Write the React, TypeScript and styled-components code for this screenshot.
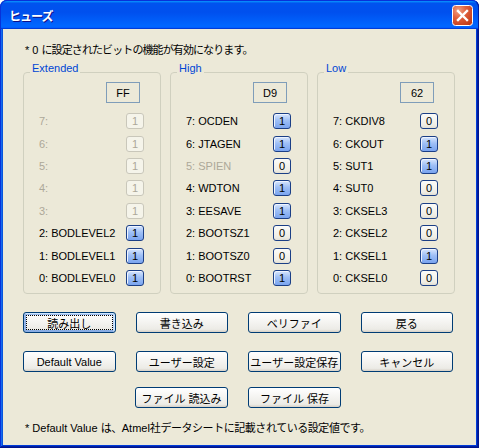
import React from "react";
import styled, { createGlobalStyle, css } from "styled-components";

const GlobalStyle = createGlobalStyle`
  html, body {
    margin: 0;
    padding: 0;
    background: #ffffff;
  }
  body {
    font-family: "Liberation Sans", "Noto Sans CJK JP", sans-serif;
    font-size: 11px;
    color: #000;
  }
`;

const Window = styled.div`
  width: 479px;
  height: 448px;
  box-sizing: border-box;
  display: flex;
  flex-direction: column;
  padding: 0 0 3px;
  background: #ece9d8;
  border-radius: 7px 7px 0 0;
  overflow: hidden;
  box-shadow: inset -1px -1px #00138c, inset 1px 1px #0831d9,
    inset -2px -2px #001ea0, inset 2px 2px #166aee, inset -3px -3px #003bda,
    inset 3px 3px #0855dd;
`;

const TitleBar = styled.div`
  height: 29px;
  flex: none;
  box-sizing: border-box;
  display: flex;
  align-items: center;
  justify-content: space-between;
  padding: 0 5px 0 8px;
  background: linear-gradient(
    180deg,
    #0997ff,
    #0053ee 8%,
    #0050ee 40%,
    #06f 88%,
    #06f 93%,
    #005bff 95%,
    #003dd7 96%,
    #003dd7
  );
  border-top: 1px solid #0831d9;
  border-left: 1px solid #0831d9;
  border-right: 1px solid #001ea0;
  border-radius: 7px 7px 0 0;
`;

const Title = styled.span`
  color: #fff;
  font-size: 12px;
  font-weight: bold;
  letter-spacing: -1px;
  text-shadow: 1px 1px #0f1089;
`;

const CloseButton = styled.button`
  width: 21px;
  height: 21px;
  padding: 0;
  border: none;
  background: none;
  display: block;
`;

const Client = styled.div`
  flex: 1;
  margin: 0 3px;
  display: flex;
  flex-direction: column;
`;

const Note = styled.div<{ $top: number }>`
  margin: ${(p) => p.$top}px 0 0 22px;
  line-height: 14px;
  white-space: nowrap;
`;

const Ja = styled.span<{ $ls: number }>`
  letter-spacing: ${(p) => p.$ls}px;
`;

const Groups = styled.div`
  margin: 4px 0 0 20px;
  width: 432px;
  display: grid;
  grid-template-columns: repeat(3, 1fr);
  column-gap: 9px;
`;

const Group = styled.fieldset`
  margin: 0;
  height: 233px;
  box-sizing: border-box;
  padding: 0 16px 0 15px;
  border: 1px solid #d0d0bf;
  border-radius: 4px;
  display: flex;
  flex-direction: column;
`;

const Legend = styled.legend`
  color: #0046d5;
  line-height: 14px;
  padding: 0 2px 8px;
  margin-left: -9px;
`;

const HexBox = styled.div`
  align-self: flex-end;
  margin: -1px 4px 0 0;
  width: 34px;
  height: 21px;
  box-sizing: border-box;
  border: 1px solid #7f9db9;
  display: flex;
  align-items: center;
  justify-content: center;
`;

const BitList = styled.div`
  margin-top: 7px;
  display: grid;
  grid-auto-rows: 22.4px;
`;

const BitRow = styled.div`
  display: flex;
  align-items: center;
  justify-content: space-between;
`;

const BitLabel = styled.span<{ $disabled?: boolean }>`
  color: ${(p) => (p.$disabled ? "#aca899" : "#000")};
  white-space: nowrap;
`;

const BitButton = styled.button<{ $on: boolean; $disabled?: boolean }>`
  width: 18px;
  height: 16px;
  box-sizing: border-box;
  padding: 0;
  font: inherit;
  line-height: 14px;
  border-radius: 3px;
  border: 1px solid #1b3f86;
  color: #000;
  ${(p) =>
    p.$disabled
      ? css`
          border-color: #c9c7ba;
          background: #f5f4ea;
          color: #aca899;
        `
      : p.$on
      ? css`
          background: linear-gradient(180deg, #d8e6fd 0%, #9fc0f6 45%, #7aa4ef 100%);
          box-shadow: inset 1px 1px #eef4ff;
        `
      : css`
          background: linear-gradient(180deg, #fbfbf8 0%, #efede5 80%, #e2dfd4 100%);
        `}
`;

const ButtonRow = styled.div<{ $top: number; $center?: boolean }>`
  margin: ${(p) => p.$top}px 0 0 20px;
  width: 430px;
  display: flex;
  justify-content: ${(p) => (p.$center ? "center" : "space-between")};
  gap: 20px;
`;

const Button = styled.button<{ $focused?: boolean }>`
  width: 93px;
  height: 21px;
  box-sizing: border-box;
  padding: 0;
  font: inherit;
  color: #000;
  white-space: nowrap;
  border: 1px solid #003c74;
  border-radius: 3px;
  background: linear-gradient(180deg, #fff, #ecebe6 86%, #d6d0c5);
  ${(p) =>
    p.$focused &&
    css`
      box-shadow: inset -1px 1px #cee7ff, inset 1px 2px #98b8ea,
        inset -2px 2px #bcd4f6, inset 1px -1px #89ade4, inset 2px -2px #89ade4;
      outline: 1px dotted #000;
      outline-offset: -4px;
    `}
`;

type Bit = { label: string; on: boolean; labelOff?: boolean; locked?: boolean };

const groups: { name: string; hex: string; bits: Bit[] }[] = [
  {
    name: "Extended",
    hex: "FF",
    bits: [
      { label: "7:", on: true, labelOff: true, locked: true },
      { label: "6:", on: true, labelOff: true, locked: true },
      { label: "5:", on: true, labelOff: true, locked: true },
      { label: "4:", on: true, labelOff: true, locked: true },
      { label: "3:", on: true, labelOff: true, locked: true },
      { label: "2: BODLEVEL2", on: true },
      { label: "1: BODLEVEL1", on: true },
      { label: "0: BODLEVEL0", on: true },
    ],
  },
  {
    name: "High",
    hex: "D9",
    bits: [
      { label: "7: OCDEN", on: true },
      { label: "6: JTAGEN", on: true },
      { label: "5: SPIEN", on: false, labelOff: true },
      { label: "4: WDTON", on: true },
      { label: "3: EESAVE", on: true },
      { label: "2: BOOTSZ1", on: false },
      { label: "1: BOOTSZ0", on: false },
      { label: "0: BOOTRST", on: true },
    ],
  },
  {
    name: "Low",
    hex: "62",
    bits: [
      { label: "7: CKDIV8", on: false },
      { label: "6: CKOUT", on: true },
      { label: "5: SUT1", on: true },
      { label: "4: SUT0", on: false },
      { label: "3: CKSEL3", on: false },
      { label: "2: CKSEL2", on: false },
      { label: "1: CKSEL1", on: true },
      { label: "0: CKSEL0", on: false },
    ],
  },
];

const CloseIcon = () => (
  <svg width="21" height="21" viewBox="0 0 21 21">
    <defs>
      <radialGradient id="closeFill" cx="30%" cy="25%" r="85%">
        <stop offset="0" stopColor="#f0a184" />
        <stop offset="0.45" stopColor="#e0603d" />
        <stop offset="1" stopColor="#c23b18" />
      </radialGradient>
    </defs>
    <rect x="0.5" y="0.5" width="20" height="20" rx="3" fill="url(#closeFill)" stroke="#fff" />
    <path d="M6 6 L15 15 M15 6 L6 15" stroke="#fff" strokeWidth="2.4" strokeLinecap="square" />
  </svg>
);

const App = () => {
  return (
    <>
      <GlobalStyle />
      <Window>
        <TitleBar>
          <Title>ヒューズ</Title>
          <CloseButton>
            <CloseIcon />
          </CloseButton>
        </TitleBar>
        <Client>
          <Note $top={14}>
            * 0 <Ja $ls={-0.9}>に設定されたビットの機能が有効になります。</Ja>
          </Note>
          <Groups>
            {groups.map((g) => (
              <Group key={g.name}>
                <Legend>{g.name}</Legend>
                <HexBox>{g.hex}</HexBox>
                <BitList>
                  {g.bits.map((b) => (
                    <BitRow key={b.label}>
                      <BitLabel $disabled={b.labelOff}>{b.label}</BitLabel>
                      <BitButton $on={b.on} $disabled={b.locked}>
                        {b.on ? "1" : "0"}
                      </BitButton>
                    </BitRow>
                  ))}
                </BitList>
              </Group>
            ))}
          </Groups>
          <ButtonRow $top={18}>
            <Button $focused>読み出し</Button>
            <Button>書き込み</Button>
            <Button>ベリファイ</Button>
            <Button>戻る</Button>
          </ButtonRow>
          <ButtonRow $top={18}>
            <Button>Default Value</Button>
            <Button>ユーザー設定</Button>
            <Button>ユーザー設定保存</Button>
            <Button>キャンセル</Button>
          </ButtonRow>
          <ButtonRow $top={15} $center>
            <Button>ファイル 読込み</Button>
            <Button>ファイル 保存</Button>
          </ButtonRow>
          <Note $top={13}>
            * Default Value <Ja $ls={-0.45}>は、</Ja>Atmel
            <Ja $ls={-0.45}>社データシートに記載されている設定値です。</Ja>
          </Note>
        </Client>
      </Window>
    </>
  );
};

export default App;
